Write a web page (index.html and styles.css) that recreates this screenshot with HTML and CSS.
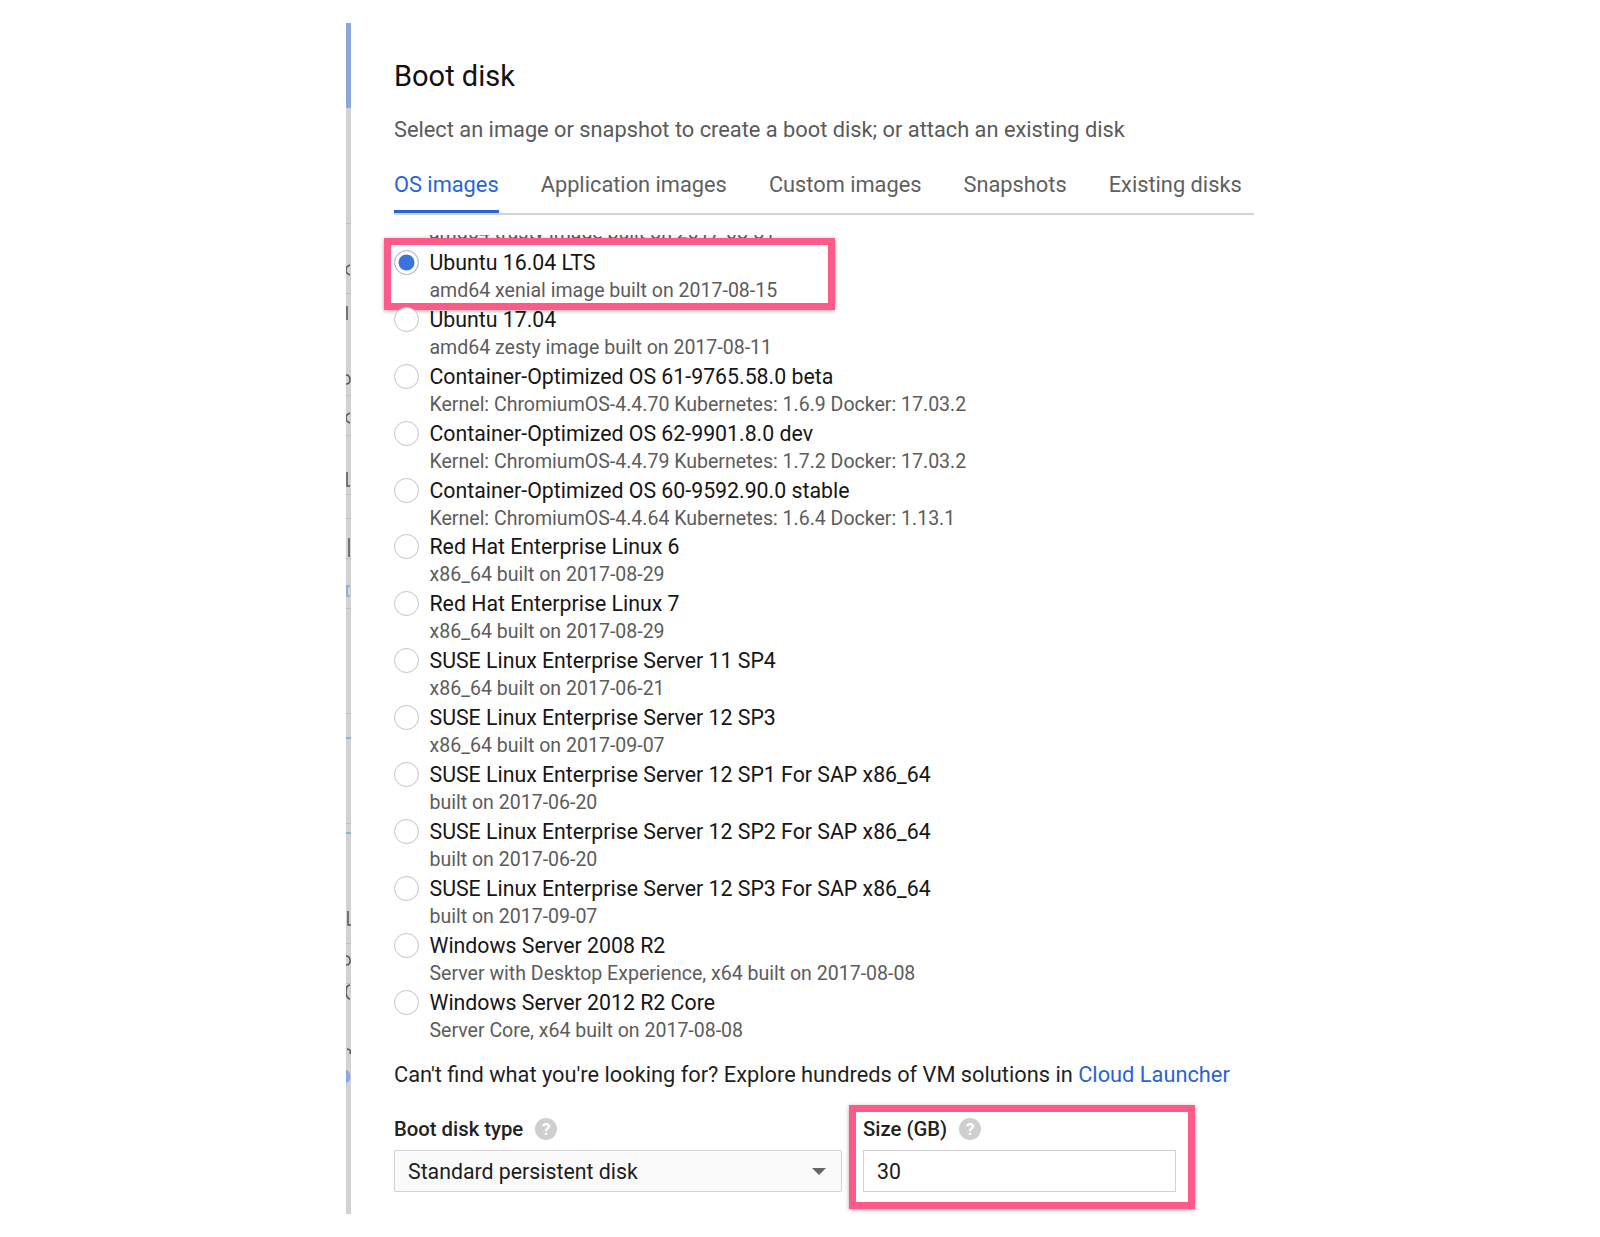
FILE: index.html
```html
<!DOCTYPE html>
<html lang="en">
<head>
  <meta charset="UTF-8" />
  <title>Boot disk</title>
  <link rel="stylesheet" href="styles.css">
</head>
<body>

<div class="page">
  <svg class="edge" width="6" height="1191" viewBox="0 0 6 1191">
    <rect width="5" height="1191" fill="#d2d2d2"/>
    <rect width="5" height="85" fill="#8aa8dc"/>
    <g fill="#bdbdbd">
      <rect y="200" width="5" height="1"/>
      <rect y="270" width="5" height="1"/>
      <rect y="372" width="5" height="1"/>
      <rect y="412" width="5" height="1"/>
      <rect y="471" width="5" height="1"/>
      <rect y="495" width="5" height="1"/>
      <rect y="535" width="5" height="1"/>
      <rect y="585" width="5" height="1"/>
      <rect y="690" width="5" height="1"/>
      <rect y="800" width="5" height="1"/>
      <rect y="920" width="5" height="1"/>
      <rect y="960" width="5" height="1"/>
    </g>
    <g fill="none" stroke="#555" stroke-width="1.5">
      <path d="M4 242c-3 1-4 3-4 5s1 4 4 5M1 283v14M0 352c3 0 4 2 4 5s-2 4-4 4M4 390c-3 1-4 3-4 5s1 4 4 5M1 449v14h3M3 515v19M2 888v14h3M0 933c3 0 4 2 4 5s-2 4-4 4M4 962c-3 0-4 3-4 7s2 7 4 7M1 1026c3 0 4 2 3 5"/>
    </g>
    <g fill="none" stroke="#7ea2e4" stroke-width="1.5">
      <path d="M4 563h-3v10h3M0 715h5M0 810h5"/>
    </g>
    <path d="M0 1047a4 6 0 0 1 0 13z" fill="#8aa8e8"/>
  </svg>

  <div class="panel">
    <h1 class="title">Boot disk</h1>
    <p class="hint">Select an image or snapshot to create a boot disk; or attach an existing disk</p>

    <div class="tabs">
      <span class="tab active">OS images</span>
      <span class="tab">Application images</span>
      <span class="tab">Custom images</span>
      <span class="tab">Snapshots</span>
      <span class="tab">Existing disks</span>
    </div>

    <div class="image-list">
      <div class="clip-row">
        <div class="sub">amd64 trusty image built on 2017-08-31</div>
      </div>

      <label class="row selected">
        <span class="radio"></span>
        <span class="info">
          <span class="name">Ubuntu 16.04 LTS</span>
          <span class="sub">amd64 xenial image built on 2017-08-15</span>
        </span>
        <span class="callout callout-image"></span>
      </label>
      <label class="row">
        <span class="radio"></span>
        <span class="info">
          <span class="name">Ubuntu 17.04</span>
          <span class="sub">amd64 zesty image built on 2017-08-11</span>
        </span>
      </label>
      <label class="row">
        <span class="radio"></span>
        <span class="info">
          <span class="name">Container-Optimized OS 61-9765.58.0 beta</span>
          <span class="sub">Kernel: ChromiumOS-4.4.70 Kubernetes: 1.6.9 Docker: 17.03.2</span>
        </span>
      </label>
      <label class="row">
        <span class="radio"></span>
        <span class="info">
          <span class="name">Container-Optimized OS 62-9901.8.0 dev</span>
          <span class="sub">Kernel: ChromiumOS-4.4.79 Kubernetes: 1.7.2 Docker: 17.03.2</span>
        </span>
      </label>
      <label class="row">
        <span class="radio"></span>
        <span class="info">
          <span class="name">Container-Optimized OS 60-9592.90.0 stable</span>
          <span class="sub">Kernel: ChromiumOS-4.4.64 Kubernetes: 1.6.4 Docker: 1.13.1</span>
        </span>
      </label>
      <label class="row">
        <span class="radio"></span>
        <span class="info">
          <span class="name">Red Hat Enterprise Linux 6</span>
          <span class="sub">x86_64 built on 2017-08-29</span>
        </span>
      </label>
      <label class="row">
        <span class="radio"></span>
        <span class="info">
          <span class="name">Red Hat Enterprise Linux 7</span>
          <span class="sub">x86_64 built on 2017-08-29</span>
        </span>
      </label>
      <label class="row">
        <span class="radio"></span>
        <span class="info">
          <span class="name">SUSE Linux Enterprise Server 11 SP4</span>
          <span class="sub">x86_64 built on 2017-06-21</span>
        </span>
      </label>
      <label class="row">
        <span class="radio"></span>
        <span class="info">
          <span class="name">SUSE Linux Enterprise Server 12 SP3</span>
          <span class="sub">x86_64 built on 2017-09-07</span>
        </span>
      </label>
      <label class="row">
        <span class="radio"></span>
        <span class="info">
          <span class="name">SUSE Linux Enterprise Server 12 SP1 For SAP x86_64</span>
          <span class="sub">built on 2017-06-20</span>
        </span>
      </label>
      <label class="row">
        <span class="radio"></span>
        <span class="info">
          <span class="name">SUSE Linux Enterprise Server 12 SP2 For SAP x86_64</span>
          <span class="sub">built on 2017-06-20</span>
        </span>
      </label>
      <label class="row">
        <span class="radio"></span>
        <span class="info">
          <span class="name">SUSE Linux Enterprise Server 12 SP3 For SAP x86_64</span>
          <span class="sub">built on 2017-09-07</span>
        </span>
      </label>
      <label class="row">
        <span class="radio"></span>
        <span class="info">
          <span class="name">Windows Server 2008 R2</span>
          <span class="sub">Server with Desktop Experience, x64 built on 2017-08-08</span>
        </span>
      </label>
      <label class="row">
        <span class="radio"></span>
        <span class="info">
          <span class="name">Windows Server 2012 R2 Core</span>
          <span class="sub">Server Core, x64 built on 2017-08-08</span>
        </span>
      </label>
    </div>

    <p class="more">Can't find what you're looking for? Explore hundreds of VM solutions in <a class="link" href="#">Cloud Launcher</a></p>

    <div class="fields">
      <div class="field field-type">
        <div class="field-label">Boot disk type <span class="help">?</span></div>
        <div class="select">
          <span>Standard persistent disk</span>
          <span class="caret"></span>
        </div>
      </div>
      <div class="field field-size">
        <div class="field-label">Size (GB) <span class="help">?</span></div>
        <div class="text-input">30</div>
        <span class="callout callout-size"></span>
      </div>
    </div>
  </div>
</div>

</body>
</html>
```

FILE: styles.css
```css
body {
  margin: 0;
  background: #fff;
  font-family: Roboto, "Liberation Sans", sans-serif;
  color: #1b1b1b;
}
.page {
  display: flex;
  height: 1237px;
  box-sizing: border-box;
  padding: 23px 0 0 346px;
}
.edge {
  display: block;
  flex: none;
}
.panel {
  width: 860px;
  margin-left: 42px;
}
.title {
  margin: 34px 0 0;
  font-size: 29px;
  line-height: 38px;
  font-weight: 400;
  color: #111;
}
.hint {
  margin: 21px 0 0;
  font-size: 21.8px;
  line-height: 28px;
  color: #5a5a5a;
}
.tabs {
  display: flex;
  gap: 42px;
  margin-top: 27px;
  border-bottom: 2px solid #d4d4d4;
  height: 42px;
}
.tab {
  font-size: 21.8px;
  line-height: 28px;
  color: #5f5f5f;
}
.tab.active {
  color: #2a63d6;
  height: 42px;
  box-sizing: border-box;
  border-bottom: 3px solid #2a63d6;
}

.image-list {
  margin-top: 20px;
}
.clip-row {
  height: 3px;
  overflow: hidden;
  padding-left: 35px;
  margin-bottom: 2px;
}
.clip-row .sub {
  margin-top: -15px;
}
.row {
  position: relative;
  display: flex;
  height: 56.9px;
}
.radio {
  flex: none;
  box-sizing: border-box;
  width: 25px;
  height: 25px;
  margin-top: 10px;
  border: 1.5px solid #c4c4c4;
  border-radius: 50%;
  background: #fff;
}
.selected .radio {
  background: #3b73dc;
  box-shadow: inset 0 0 0 3.5px #fff;
}
.info {
  margin-left: 10.5px;
}
.name, .sub {
  display: block;
  white-space: nowrap;
}
.name {
  margin: 8px 0 1px;
  font-size: 21.3px;
  line-height: 29px;
  color: #161616;
}
.sub {
  font-size: 19.55px;
  line-height: 26px;
  color: #5c5c5c;
}

.callout {
  position: absolute;
  box-sizing: border-box;
  border: 7px solid #fd5a8a;
  box-shadow: 0 1px 4px rgba(0, 0, 0, 0.35);
  pointer-events: none;
}
.callout-image {
  left: -10px;
  top: -2px;
  width: 451px;
  height: 72px;
}
.callout-size {
  left: -14px;
  top: -10px;
  width: 346px;
  height: 104px;
}

.more {
  margin: 25px 0 0;
  font-size: 21.8px;
  line-height: 28px;
  color: #1f1f1f;
}
.link {
  color: #2a63d6;
  text-decoration: none;
}

.fields {
  display: flex;
  gap: 21px;
  margin-top: 26px;
}
.field {
  position: relative;
}
.field-type { width: 448px; }
.field-size { width: 313px; }
.field-label {
  display: flex;
  align-items: center;
  gap: 12px;
  height: 28px;
  font-size: 20.3px;
  font-weight: 500;
  color: #222;
}
.help {
  width: 22px;
  height: 22px;
  border-radius: 50%;
  background: #cfcfcf;
  color: #fff;
  font-size: 17px;
  font-weight: 700;
  line-height: 22px;
  text-align: center;
}
.select, .text-input {
  box-sizing: border-box;
  display: flex;
  align-items: center;
  height: 42px;
  margin-top: 7px;
  padding: 0 13px;
  font-size: 21.3px;
  color: #1c1c1c;
  border: 1.5px solid #d2d2d2;
}
.select {
  justify-content: space-between;
  background: #fafafa;
  border-radius: 2px;
  padding-right: 15px;
}
.text-input {
  background: #fff;
}
.caret {
  width: 0;
  height: 0;
  border-left: 7px solid transparent;
  border-right: 7px solid transparent;
  border-top: 7px solid #666;
}
```
